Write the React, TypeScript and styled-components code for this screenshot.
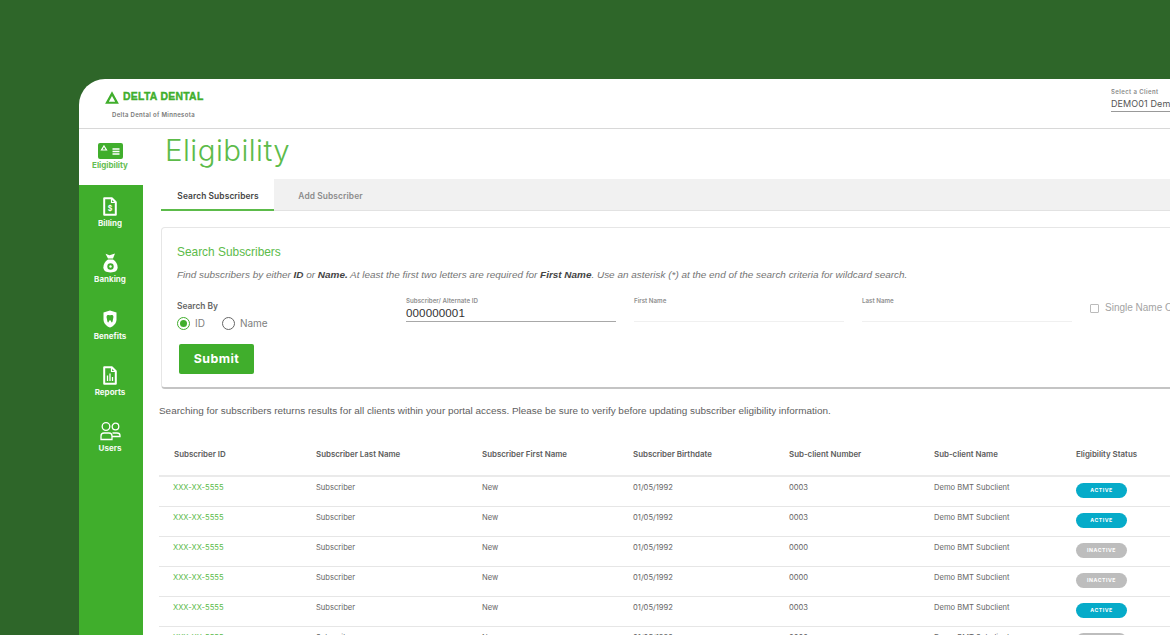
import { createGlobalStyle, styled } from 'styled-components'
import type { ReactNode } from 'react'

const GlobalStyle = createGlobalStyle`
  html, body {
    margin: 0;
    height: 100%;
    overflow: hidden;
    background: #2e6629;
  }
  * { box-sizing: border-box; }
`

const green = '#40ae2c'
const lightGreen = '#5cbb4a'

const Page = styled.div`
  width: 1170px;
  height: 635px;
  padding: 79px 0 0 79px;
  overflow: hidden;
`

const Frame = styled.div`
  width: 1091px;
  height: 556px;
  background: #fff;
  border-top-left-radius: 26px;
  overflow: hidden;
  display: flex;
  flex-direction: column;
`

const Header = styled.header`
  height: 50px;
  flex: none;
  border-bottom: 1px solid #d8d8d8;
  display: flex;
  justify-content: space-between;
  padding: 0 0 0 26px;
`

const LogoBlock = styled.div`
  display: flex;
  flex-direction: column;
`

const LogoRow = styled.div`
  display: flex;
  align-items: center;
  gap: 4px;
  height: 14px;
  margin-top: 11px;
`

const LogoText = styled.span`
  font: 700 10.4px/14px 'Liberation Sans', sans-serif;
  color: ${green};
  letter-spacing: 0.3px;
  -webkit-text-stroke: 0.4px ${green};
  white-space: nowrap;
`

const LogoSub = styled.span`
  font: 600 6px/8px Inter, sans-serif;
  color: #777;
  letter-spacing: 0.32px;
  margin: 7px 0 0 7px;
  white-space: nowrap;
`

const ClientPicker = styled.div`
  width: 59px;
  margin: 9px 0 0 0;
  overflow: hidden;
  white-space: nowrap;
`

const ClientLabel = styled.div`
  font: 600 6px/7px Inter, sans-serif;
  color: #8a8a8a;
  letter-spacing: 0.4px;
`

const ClientValue = styled.div`
  font: 400 9px/13px Inter, sans-serif;
  color: #555;
  height: 17px;
  padding-top: 2px;
  letter-spacing: 0.1px;
  border-bottom: 1px solid #999;
`

const Body = styled.div`
  flex: 1;
  display: flex;
  min-height: 0;
`

const Sidebar = styled.nav`
  width: 64px;
  flex: none;
  background: ${green};
`

const NavItem = styled.div<{ $active?: boolean }>`
  height: ${({ $active }) => ($active ? '56px' : '56.25px')};
  padding: 12px 2px 0 0;
  background: ${({ $active }) => ($active ? '#fff' : 'transparent')};
  color: ${({ $active }) => ($active ? lightGreen : '#fff')};
  display: flex;
  flex-direction: column;
  align-items: center;
`

const NavIcon = styled.div`
  height: 19px;
  display: flex;
  align-items: center;
  justify-content: center;
`

const NavLabel = styled.span<{ $active?: boolean }>`
  font: 700 8px/10px Inter, sans-serif;
  margin-top: ${({ $active }) => ($active ? '0' : '2px')};
  opacity: 0.95;
`

const Main = styled.main`
  flex: 1;
  min-width: 0;
  overflow: hidden;
  padding: 0 0 0 16px;
`

const Title = styled.h1`
  margin: 0 0 0 6px;
  height: 50px;
  font: 300 29.5px/43px Inter, sans-serif;
  color: ${lightGreen};
  letter-spacing: 0.45px;
`

const Tabs = styled.div`
  margin-left: 2px;
  width: 1100px;
  height: 32px;
  background: #f1f1f1;
  border-bottom: 1px solid #e2e2e2;
  display: flex;
`

const Tab = styled.div<{ $active?: boolean }>`
  width: 113px;
  height: 32px;
  background: ${({ $active }) => ($active ? '#fff' : 'transparent')};
  border-bottom: ${({ $active }) => ($active ? `2px solid ${lightGreen}` : 'none')};
  font: 600 8.4px/34px Inter, sans-serif;
  color: ${({ $active }) => ($active ? '#444' : '#8c8c8c')};
  text-align: center;
  padding-left: ${({ $active }) => ($active ? '1px' : '0')};
  letter-spacing: 0.1px;
`

const Card = styled.section`
  margin: 16px 0 0 2px;
  width: 1100px;
  height: 162px;
  background: #fff;
  border: 1px solid #e6e6e6;
  border-bottom: 2px solid #c4c4c4;
  border-radius: 4px;
  padding: 17px 15px 0;
`

const CardTitle = styled.h2`
  margin: 0;
  font: 400 11.9px/15px 'Liberation Sans', sans-serif;
  color: ${lightGreen};
`

const Hint = styled.p`
  margin: 8px 0 0;
  font: italic 400 9.95px/14px 'Liberation Sans', sans-serif;
  color: #757575;
  white-space: nowrap;

  b {
    color: #444;
  }
`

const FormRow = styled.div`
  margin-top: 15px;
  display: flex;
  align-items: flex-start;
`

const SearchBy = styled.div`
  width: 229px;
  flex: none;
  padding-top: 4px;
`

const SearchLabel = styled.div`
  font: 600 8.4px/11px Inter, sans-serif;
  color: #666;
`

const Radios = styled.div`
  display: flex;
  gap: 17px;
  margin-top: 5px;
`

const RadioOption = styled.label`
  display: flex;
  align-items: center;
  gap: 5px;
  font: 400 10px/13px Inter, sans-serif;
  color: #808080;
`

const RadioDot = styled.span<{ $on?: boolean }>`
  width: 13px;
  height: 13px;
  border-radius: 50%;
  border: 1.5px solid ${({ $on }) => ($on ? green : '#666')};
  display: flex;
  align-items: center;
  justify-content: center;

  &::after {
    content: '';
    width: 7px;
    height: 7px;
    border-radius: 50%;
    background: ${({ $on }) => ($on ? green : 'transparent')};
  }
`

const Field = styled.div<{ $filled?: boolean }>`
  width: 210px;
  height: 25px;
  margin-right: 18px;
  flex: none;
  border-bottom: 1px solid ${({ $filled }) => ($filled ? '#a8a8a8' : '#f0f0f0')};
`

const FieldLabel = styled.div`
  font: 600 6.2px/8px Inter, sans-serif;
  color: #8f8f8f;
`

const FieldValue = styled.div`
  font: 400 11.6px/15px 'Liberation Sans', sans-serif;
  color: #333;
  letter-spacing: 0.1px;
`

const CheckOption = styled.div`
  display: flex;
  align-items: center;
  gap: 6px;
  margin-top: 4px;
  font: 400 10px/14px 'Liberation Sans', sans-serif;
  color: #a3a3a3;
  white-space: nowrap;
`

const CheckBox = styled.span`
  width: 9px;
  height: 9px;
  border: 1px solid #bbb;
  border-radius: 1px;
`

const SubmitButton = styled.button`
  display: block;
  margin: 14px 0 0 2px;
  width: 75px;
  height: 30px;
  background: ${green};
  border: 0;
  border-radius: 2px;
  color: #fff;
  font: 700 12.4px/30px Inter, sans-serif;
  letter-spacing: 0.45px;
  padding: 0;
`

const Notice = styled.p`
  margin: 15px 0 0;
  font: 400 9.94px/14px 'Liberation Sans', sans-serif;
  color: #5e5e5e;
  white-space: nowrap;
`

const Table = styled.div`
  margin-top: 23px;
  width: 1100px;
`

const columns = '142px 166px 151px 156px 145px 142px 1fr'

const HeadRow = styled.div`
  display: grid;
  grid-template-columns: ${columns};
  height: 36px;
  border-bottom: 2px solid #eaeaea;
  padding: 7px 0 0 15px;
  font: 600 7.9px/12px Inter, sans-serif;
  color: #5c5c5c;
`

const Row = styled.div`
  display: grid;
  grid-template-columns: ${columns};
  height: 30px;
  border-bottom: 1px solid #e6e6e6;
  padding: 5px 0 0 15px;
  font: 400 7.6px/12px Inter, sans-serif;
  color: #666;
`

const IdLink = styled.a`
  color: ${lightGreen};
  margin-left: -1px;
`

const Status = styled.span<{ $active: boolean }>`
  width: 51px;
  height: 15px;
  margin-top: 1px;
  border-radius: 8px;
  background: ${({ $active }) => ($active ? '#06abc9' : '#bdbdbd')};
  color: #fff;
  font: 700 5.2px/15px Inter, sans-serif;
  letter-spacing: 0.5px;
  text-align: center;
`

const DocIcon = ({ children }: { children: ReactNode }) => (
  <svg width="14" height="19" viewBox="0 0 14 19" fill="none">
    <path d="M1.2 1.2h7.6l4 4v12.600h-11.600z" stroke="#fff" strokeWidth="2" strokeLinejoin="round" />
    <path d="M8.500 1v4.500H13" stroke="#fff" strokeWidth="1.200" />
    {children}
  </svg>
)

const navItems: { label: string; icon: ReactNode }[] = [
  {
    label: 'Billing',
    icon: (
      <DocIcon>
        <text x="7" y="14" fontSize="7" fontWeight="700" fill="#fff" textAnchor="middle" fontFamily="Inter, sans-serif">$</text>
      </DocIcon>
    ),
  },
  {
    label: 'Banking',
    icon: (
      <svg width="15" height="20" viewBox="0 0 15 20">
        <path d="M2.500.8 6.500 2.300 12 .5 10 5.500H5z" fill="#fff" />
        <path d="M5 6.500h5c3 1.600 4.600 5 4.600 7.800 0 3.400-2.600 5.200-7.100 5.200S.4 17.700.4 14.300C.4 11.500 2 8.100 5 6.500z" fill="#fff" />
        <circle cx="7.500" cy="13.500" r="3.200" fill={green} />
        <circle cx="7.500" cy="13.500" r="1.200" fill="#fff" />
      </svg>
    ),
  },
  {
    label: 'Benefits',
    icon: (
      <svg width="14" height="18" viewBox="0 0 14 18">
        <path d="M7 .5 13.500 2.500v6.700c0 3.800-2.600 6.900-6.500 8.300C3.100 16.100.5 13 .5 9.200V2.500z" fill="#fff" />
        <path d="M4.200 5.200c1.100-.4 2-.1 2.800.2.800-.3 1.700-.6 2.800-.2.900.8.700 2.300.3 3.500-.3 1.200-.4 3.300-1.200 3.800-.8.200-.8-2.200-1.900-2.200s-1.100 2.400-1.900 2.200c-.8-.5-.9-2.600-1.200-3.800-.4-1.200-.6-2.700.3-3.500z" fill={green} />
      </svg>
    ),
  },
  {
    label: 'Reports',
    icon: (
      <DocIcon>
        <path d="M4.500 15V9.500M7 15V7.500M9.500 15v-4" stroke="#fff" strokeWidth="1.300" />
      </DocIcon>
    ),
  },
  {
    label: 'Users',
    icon: (
      <svg width="21" height="19" viewBox="0 0 21 19" fill="none" stroke="#fff" strokeWidth="1.300">
        <circle cx="6" cy="4.500" r="3.800" />
        <circle cx="15.500" cy="4.500" r="3.300" />
        <path d="M1 17.500v-3.500c0-1.800 1.200-3 3-3h5c1.800 0 3 1.200 3 3v3.500z" />
        <path d="M12.500 11h4.500c1.800 0 3 1 3 2.500v1h-8" />
      </svg>
    ),
  },
]

const rows = [
  { birth: '01/05/1992', num: '0003', active: true },
  { birth: '01/05/1992', num: '0003', active: true },
  { birth: '01/05/1992', num: '0000', active: false },
  { birth: '01/05/1992', num: '0000', active: false },
  { birth: '01/05/1992', num: '0003', active: true },
  { birth: '01/05/1992', num: '0000', active: false },
]

const heads = [
  'Subscriber ID',
  'Subscriber Last Name',
  'Subscriber First Name',
  'Subscriber Birthdate',
  'Sub-client Number',
  'Sub-client Name',
  'Eligibility Status',
]

export default function App() {
  return (
    <Page>
      <GlobalStyle />
      <Frame>
        <Header>
          <LogoBlock>
            <LogoRow>
              <svg width="14" height="13" viewBox="0 0 14 13">
                <path fillRule="evenodd" d="M7 .2 13.900 12.800H.1zM7 5 3.800 10.800h6.400z" fill={green} />
              </svg>
              <LogoText>DELTA DENTAL</LogoText>
            </LogoRow>
            <LogoSub>Delta Dental of Minnesota</LogoSub>
          </LogoBlock>
          <ClientPicker>
            <ClientLabel>Select a Client</ClientLabel>
            <ClientValue>DEMO01 Demo</ClientValue>
          </ClientPicker>
        </Header>
        <Body>
          <Sidebar>
            <NavItem $active>
              <NavIcon>
                <svg width="25" height="16" viewBox="0 0 25 16">
                  <rect width="25" height="16" rx="2" fill={green} />
                  <path d="M6 3 8.500 7h-5z" fill="none" stroke="#fff" strokeWidth="1.200" />
                  <path d="M14.500 6h7M14.500 8.500h7M14.500 11h7" stroke="#fff" strokeWidth="1.300" />
                </svg>
              </NavIcon>
              <NavLabel $active>Eligibility</NavLabel>
            </NavItem>
            {navItems.map((item) => (
              <NavItem key={item.label}>
                <NavIcon>{item.icon}</NavIcon>
                <NavLabel>{item.label}</NavLabel>
              </NavItem>
            ))}
          </Sidebar>
          <Main>
            <Title>Eligibility</Title>
            <Tabs>
              <Tab $active>Search Subscribers</Tab>
              <Tab>Add Subscriber</Tab>
            </Tabs>
            <Card>
              <CardTitle>Search Subscribers</CardTitle>
              <Hint>
                Find subscribers by either <b>ID</b> or <b>Name.</b> At least the first two letters are required for{' '}
                <b>First Name</b>. Use an asterisk (*) at the end of the search criteria for wildcard search.
              </Hint>
              <FormRow>
                <SearchBy>
                  <SearchLabel>Search By</SearchLabel>
                  <Radios>
                    <RadioOption>
                      <RadioDot $on />
                      ID
                    </RadioOption>
                    <RadioOption>
                      <RadioDot />
                      Name
                    </RadioOption>
                  </Radios>
                </SearchBy>
                <Field $filled>
                  <FieldLabel>Subscriber/ Alternate ID</FieldLabel>
                  <FieldValue>000000001</FieldValue>
                </Field>
                <Field>
                  <FieldLabel>First Name</FieldLabel>
                </Field>
                <Field>
                  <FieldLabel>Last Name</FieldLabel>
                </Field>
                <CheckOption>
                  <CheckBox />
                  Single Name Only
                </CheckOption>
              </FormRow>
              <SubmitButton>Submit</SubmitButton>
            </Card>
            <Notice>
              Searching for subscribers returns results for all clients within your portal access. Please be sure to
              verify before updating subscriber eligibility information.
            </Notice>
            <Table>
              <HeadRow>
                {heads.map((h) => (
                  <span key={h}>{h}</span>
                ))}
              </HeadRow>
              {rows.map((r, i) => (
                <Row key={i}>
                  <IdLink>XXX-XX-5555</IdLink>
                  <span>Subscriber</span>
                  <span>New</span>
                  <span>{r.birth}</span>
                  <span>{r.num}</span>
                  <span>Demo BMT Subclient</span>
                  <Status $active={r.active}>{r.active ? 'ACTIVE' : 'INACTIVE'}</Status>
                </Row>
              ))}
            </Table>
          </Main>
        </Body>
      </Frame>
    </Page>
  )
}
